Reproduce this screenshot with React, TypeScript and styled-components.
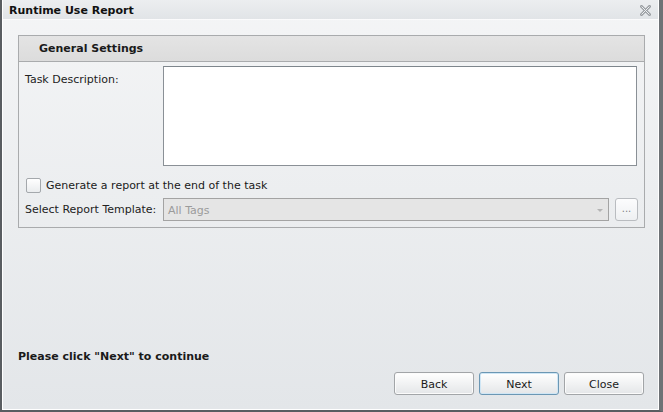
import React from "react";
import styled, { createGlobalStyle } from "styled-components";

const Global = createGlobalStyle`
  html, body { margin: 0; padding: 0; background: #6a6e72; }
  body { font-family: "DejaVu Sans", sans-serif; font-size: 11px; color: #1a1a1a; }
  * { box-sizing: border-box; }
`;

const Frame = styled.div`
  width: 663px;
  height: 412px;
  border-left: 2px solid #595d61;
  border-right: 4px solid #6e7276;
  border-bottom: 2px solid #595d61;
`;

const Inner = styled.div`
  height: 100%;
  display: flex;
  flex-direction: column;
  border-left: 1px solid #ffffff;
  border-right: 1px solid #ffffff;
  border-bottom: 1px solid #ffffff;
  background: linear-gradient(#f4f5f6, #e3e6e9);
`;

const TitleBar = styled.div`
  height: 20px;
  flex: none;
  display: flex;
  align-items: center;
  justify-content: space-between;
  padding: 2px 6px 0 6px;
  background: linear-gradient(#eceef0, #e1e4e7);
  border-bottom: 1px solid #fbfbfc;
`;

const Title = styled.span`
  font-weight: bold;
  font-size: 11px;
  color: #111;
`;

const Body = styled.div`
  flex: 1;
  display: flex;
  flex-direction: column;
  padding: 15px 13px 14px 15px;
`;

const Group = styled.div`
  border: 1px solid #a9abad;
  display: flex;
  flex-direction: column;
`;

const GroupHeader = styled.div`
  height: 26px;
  display: flex;
  align-items: center;
  padding-left: 20px;
  font-weight: bold;
  background: linear-gradient(#e4e4e4, #dcdcdc);
  border-bottom: 1px solid #a9abad;
`;

const Form = styled.div`
  display: flex;
  flex-direction: column;
  padding: 4px 6px 6px 6px;
`;

const Row = styled.div<{ $top?: boolean }>`
  display: grid;
  grid-template-columns: 138px 1fr;
  align-items: ${(p) => (p.$top ? "start" : "center")};
`;

const Label = styled.div<{ $pad?: number }>`
  padding-top: ${(p) => p.$pad ?? 0}px;
  color: #222;
`;

const TextArea = styled.div`
  height: 100px;
  margin-right: 1px;
  background: #fff;
  border: 1px solid #8a9096;
  border-top-color: #7e868c;
`;

const CheckRow = styled.label`
  display: flex;
  align-items: center;
  gap: 5px;
  margin: 12px 0 0 1px;
  height: 15px;
`;

const Box = styled.span`
  width: 15px;
  height: 15px;
  border: 1px solid #a4a8ac;
  border-radius: 2px;
  background: linear-gradient(#ffffff, #eaecee);
`;

const SelectWrap = styled.div`
  display: flex;
  gap: 6px;
  margin-top: 5px;
`;

const Select = styled.div`
  flex: 1;
  height: 23px;
  display: flex;
  align-items: center;
  justify-content: space-between;
  padding: 1px 4px 0 4px;
  background: #e5e5e5;
  border: 1px solid #a3a3a3;
  color: #9b9b9b;
`;

const Arrow = styled.span`
  width: 0;
  height: 0;
  border-left: 3px solid transparent;
  border-right: 3px solid transparent;
  border-top: 3px solid #b4b4b4;
  margin-right: 1px;
`;

const DotsButton = styled.div`
  width: 23px;
  height: 23px;
  border: 1px solid #b9bcc0;
  border-radius: 3px;
  background: linear-gradient(#fcfcfd, #eef0f2);
  display: flex;
  align-items: center;
  justify-content: center;
  color: #7e8286;
  font-size: 10px;
  padding-bottom: 2px;
`;

const Spacer = styled.div`
  flex: 1;
`;

const Hint = styled.div`
  font-weight: bold;
  padding-left: 0;
  margin-bottom: 9px;
`;

const Buttons = styled.div`
  display: flex;
  justify-content: flex-end;
  gap: 5px;
  padding-right: 1px;
`;

const Button = styled.div<{ $focus?: boolean }>`
  width: 80px;
  height: 23px;
  display: flex;
  align-items: center;
  justify-content: center;
  padding-top: 1px;
  border-radius: 3px;
  border: 1px solid ${(p) => (p.$focus ? "#6b97b4" : "#a2a5a8")};
  background: linear-gradient(#ffffff, #e4e6e8);
  box-shadow: ${(p) => (p.$focus ? "inset 0 0 0 1px #cfe6f5" : "inset 0 0 0 1px #fbfbfb")};
  color: #1a1a1a;
`;

const CloseIcon = () => (
  <svg width="11" height="11" viewBox="0 0 11 11" style={{ marginRight: 1 }}>
    <path d="M1.5 1.5 L9.5 9.5 M9.5 1.5 L1.5 9.5" stroke="#9a9ea2" strokeWidth="3" strokeLinecap="square" fill="none" />
    <path d="M1.5 1.5 L9.5 9.5 M9.5 1.5 L1.5 9.5" stroke="#eef0f2" strokeWidth="1" fill="none" />
  </svg>
);

export default function App() {
  return (
    <>
      <Global />
      <Frame>
        <Inner>
          <TitleBar>
            <Title>Runtime Use Report</Title>
            <CloseIcon />
          </TitleBar>
          <Body>
            <Group>
              <GroupHeader>General Settings</GroupHeader>
              <Form>
                <Row $top>
                  <Label $pad={7}>Task Description:</Label>
                  <TextArea />
                </Row>
                <CheckRow>
                  <Box />
                  <span>Generate a report at the end of the task</span>
                </CheckRow>
                <Row>
                  <Label $pad={5}>Select Report Template:</Label>
                  <SelectWrap>
                    <Select>
                      <span>All Tags</span>
                      <Arrow />
                    </Select>
                    <DotsButton>...</DotsButton>
                  </SelectWrap>
                </Row>
              </Form>
            </Group>
            <Spacer />
            <Hint>Please click "Next" to continue</Hint>
            <Buttons>
              <Button>Back</Button>
              <Button $focus>Next</Button>
              <Button>Close</Button>
            </Buttons>
          </Body>
        </Inner>
      </Frame>
    </>
  );
}
